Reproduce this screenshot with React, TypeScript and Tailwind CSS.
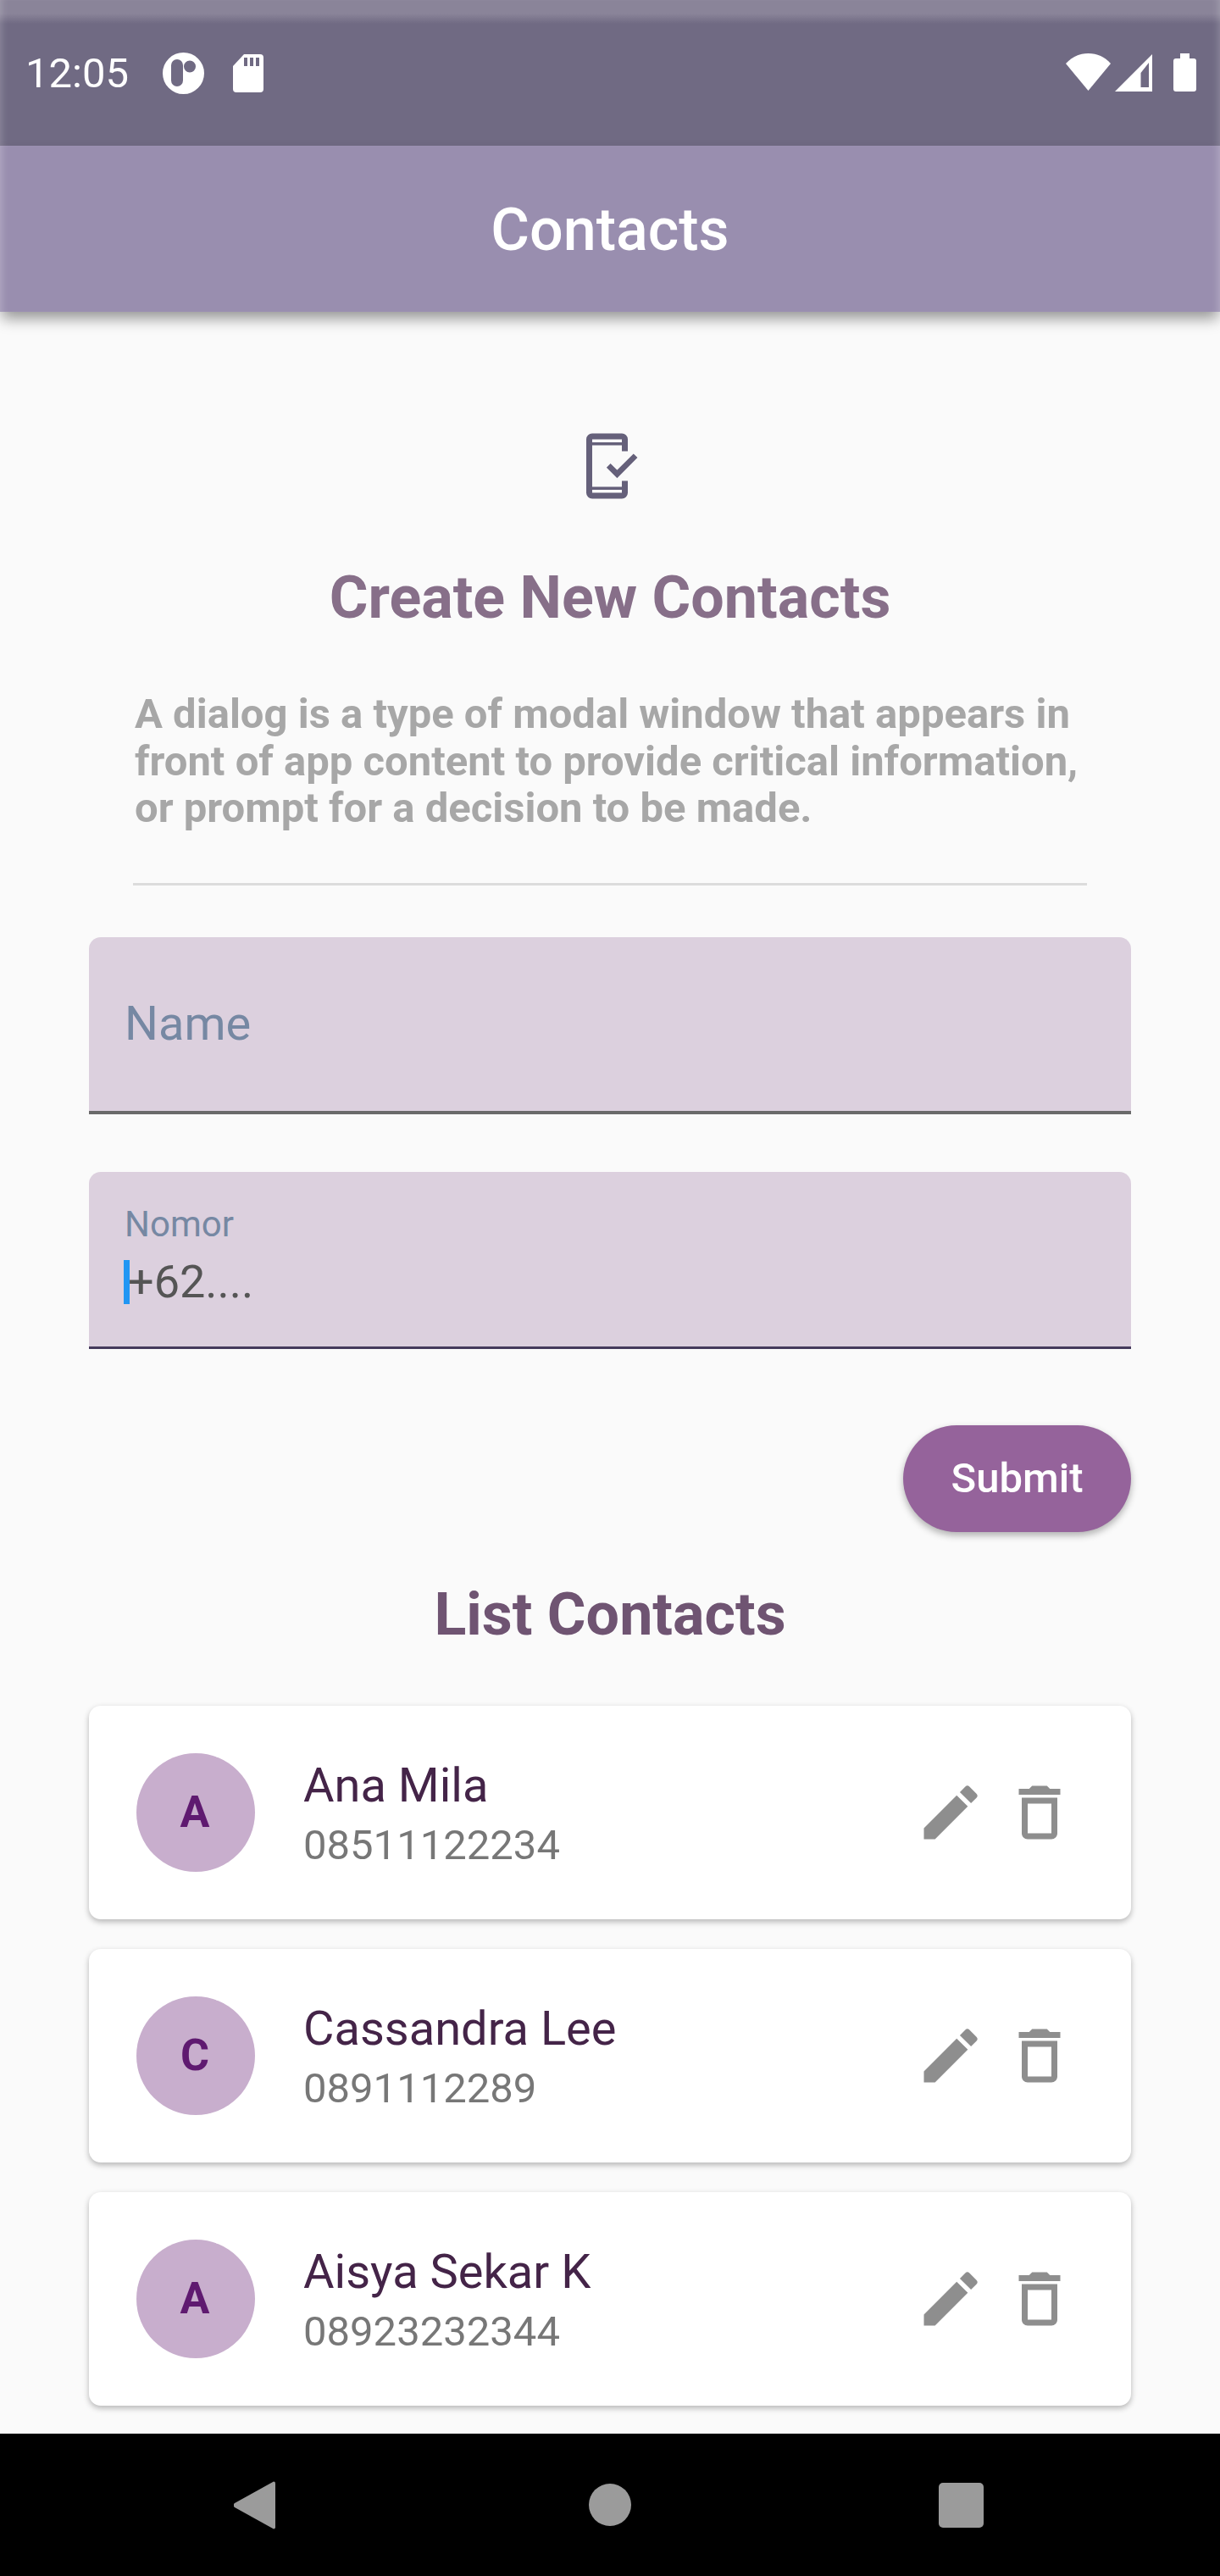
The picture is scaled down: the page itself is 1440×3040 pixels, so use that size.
import { MdEdit, MdDeleteOutline } from 'react-icons/md';

const contacts = [
  { name: 'Ana Mila', phone: '08511122234' },
  { name: 'Cassandra Lee', phone: '0891112289' },
  { name: 'Aisya Sekar K', phone: '08923232344' },
];

function StatusBar() {
  return (
    <div className="flex h-[172px] shrink-0 items-start bg-[linear-gradient(to_bottom,#8a8499_0px,#8a8499_16px,#706a83_28px)] pl-[30px] pr-[28px] pt-[62px] text-white shadow-[inset_8px_0_8px_-6px_rgba(255,255,255,0.2),inset_-8px_0_8px_-6px_rgba(255,255,255,0.2)]">
      <span className="text-[49px] leading-[50px]">12:05</span>
      <svg width="49" height="49" viewBox="0 0 49 49" className="ml-[40px]">
        <path
          fill="#fff"
          fillRule="evenodd"
          d="M24.5 0a24.5 24.5 0 1 0 0 49a24.5 24.5 0 1 0 0-49zM17 8a7 7 0 0 1 7 7v18a7 7 0 0 1-14 0V15a7 7 0 0 1 7-7zM32 9.500a7 7 0 1 1 0 14a7 7 0 1 1 0-14z"
        />
      </svg>
      <svg width="36" height="45" viewBox="0 0 36 45" className="ml-[34px] mt-[2px]">
        <path fill="#fff" d="M13 0H32a4 4 0 0 1 4 4V41a4 4 0 0 1-4 4H4a4 4 0 0 1-4-4V14z" />
        <path fill="#706a83" d="M13 4h4v10h-4zM20 4h4v10h-4zM27 4h4v10h-4z" />
      </svg>
      <div className="ml-auto flex items-start">
        <svg width="53" height="44" viewBox="0 0 53 44" className="mt-[1px]">
          <path fill="#fff" d="M26.500 44L0 12C7 4 16 0 26.500 0S46 4 53 12z" />
        </svg>
        <svg width="44" height="44" viewBox="0 0 44 44" className="ml-[5px] mt-[2px]">
          <path fill="#fff" fillRule="evenodd" d="M44 0V44H0zM40 10L30.500 22V39H40z" />
        </svg>
        <div className="ml-[25px] mt-[1px] flex flex-col items-center">
          <div className="h-[6px] w-[11px] bg-white" />
          <div className="h-[39px] w-[27px] rounded-[3px] bg-white" />
        </div>
      </div>
    </div>
  );
}

function AppBar() {
  return (
    <div className="relative z-10 flex h-[196px] shrink-0 items-center justify-center bg-[#998eaf] shadow-[inset_8px_0_8px_-6px_rgba(255,255,255,0.25),inset_-8px_0_8px_-6px_rgba(255,255,255,0.25),0_10px_16px_-2px_rgba(0,0,0,0.4)]">
      <h1 className="mt-[2px] text-[70px] font-medium leading-none text-white">Contacts</h1>
    </div>
  );
}

function PhoneCheckIcon() {
  return (
    <svg width="84" height="84" viewBox="0 0 24 24" className="mx-auto block">
      <path
        fill="#65607a"
        fillRule="evenodd"
        d="M6 1h10a2 2 0 0 1 2 2v4h-2V5H6v14h10v-2h2v4a2 2 0 0 1-2 2H6a2 2 0 0 1-2-2V3a2 2 0 0 1 2-2zM6 3v1h10V3zM6 20v1h10v-1z"
      />
      <path fill="none" stroke="#65607a" strokeWidth="1.9" d="M11.500 11.800l2.900 2.900l6.200-6.200" />
    </svg>
  );
}

function ContactCard({ name, phone }: { name: string; phone: string }) {
  return (
    <div className="flex h-[252px] items-center rounded-[14px] bg-white pl-[56px] pr-[66px] shadow-[0_3px_7px_rgba(0,0,0,0.28)]">
      <div className="flex h-[140px] w-[140px] shrink-0 items-center justify-center rounded-full bg-[#c8aecd] pr-[2px] text-[52px] font-bold text-[#5f1a70]">
        {name[0]}
      </div>
      <div className="ml-[57px] flex-1 pt-[2px]">
        <p className="text-[56px] leading-[66px] text-[#442448]">{name}</p>
        <p className="mt-[10px] text-[49px] leading-[56px] text-[#777777]">{phone}</p>
      </div>
      <MdEdit size={84} className="text-[#8e8e8e]" />
      <MdDeleteOutline size={84} className="ml-[21px] text-[#8e8e8e]" />
    </div>
  );
}

export default function App() {
  return (
    <div className="flex h-[3040px] w-[1440px] flex-col overflow-hidden bg-[#fafafa] font-['Roboto',sans-serif]">
      <StatusBar />
      <AppBar />

      <main className="flex-1 overflow-hidden px-[105px] pt-[140px]">
        <PhoneCheckIcon />
        <h2 className="mt-[73px] text-center text-[70px] font-bold leading-[80px] text-[#876f89]">
          Create New Contacts
        </h2>
        <p className="mx-[54px] mt-[70px] text-[49px] font-bold leading-[55.500px] text-[#a7a7a7]">
          A dialog is a type of modal window that appears in front of app content to provide critical information, or prompt for a decision to be made.
        </p>
        <div className="mx-[52px] mt-[60px] h-[3px] bg-[#dcdcdc]" />

        <div className="mt-[61px] flex h-[209px] items-center rounded-t-[14px] border-b-[4px] border-[#6a6a6a] bg-[#dcd0de] pl-[42px]">
          <span className="text-[56px] leading-none text-[#7688a3]">Name</span>
        </div>

        <div className="mt-[68px] h-[209px] rounded-t-[14px] border-b-[3px] border-[#453a5c] bg-[#dcd0de] pl-[42px] pt-[37px]">
          <p className="text-[42px] leading-[50px] text-[#7688a3]">Nomor</p>
          <div className="-ml-[1px] mt-[17px] flex items-center">
            <span className="h-[52px] w-[7px] bg-[#2196f3]" />
            <span className="-ml-[2px] text-[54px] leading-[52px] text-[#555555]">+62....</span>
          </div>
        </div>

        <div className="mt-[90px] flex justify-end">
          <button className="h-[126px] w-[269px] rounded-full bg-[#95639b] text-[49px] font-medium text-white shadow-[0_4px_8px_rgba(0,0,0,0.3)]">
            Submit
          </button>
        </div>

        <h2 className="mt-[57px] text-center text-[70px] font-bold leading-[80px] text-[#6f5472]">
          List Contacts
        </h2>

        <div className="mt-[68px] flex flex-col gap-[35px]">
          {contacts.map((c) => (
            <ContactCard key={c.phone} name={c.name} phone={c.phone} />
          ))}
        </div>
      </main>

      <nav className="flex h-[168px] shrink-0 items-center bg-black">
        <svg width="49" height="57" viewBox="0 0 49 57" className="ml-[276px]">
          <path fill="#9b9b9b" d="M47 0.500a2 2 0 0 1 2 2V54.500a2 2 0 0 1-2 2L1 31a3 3 0 0 1 0-5z" />
        </svg>
        <div className="ml-[370px] h-[50px] w-[50px] rounded-full bg-[#9b9b9b]" />
        <div className="ml-[363px] h-[53px] w-[53px] rounded-[5px] bg-[#9b9b9b]" />
      </nav>
    </div>
  );
}
